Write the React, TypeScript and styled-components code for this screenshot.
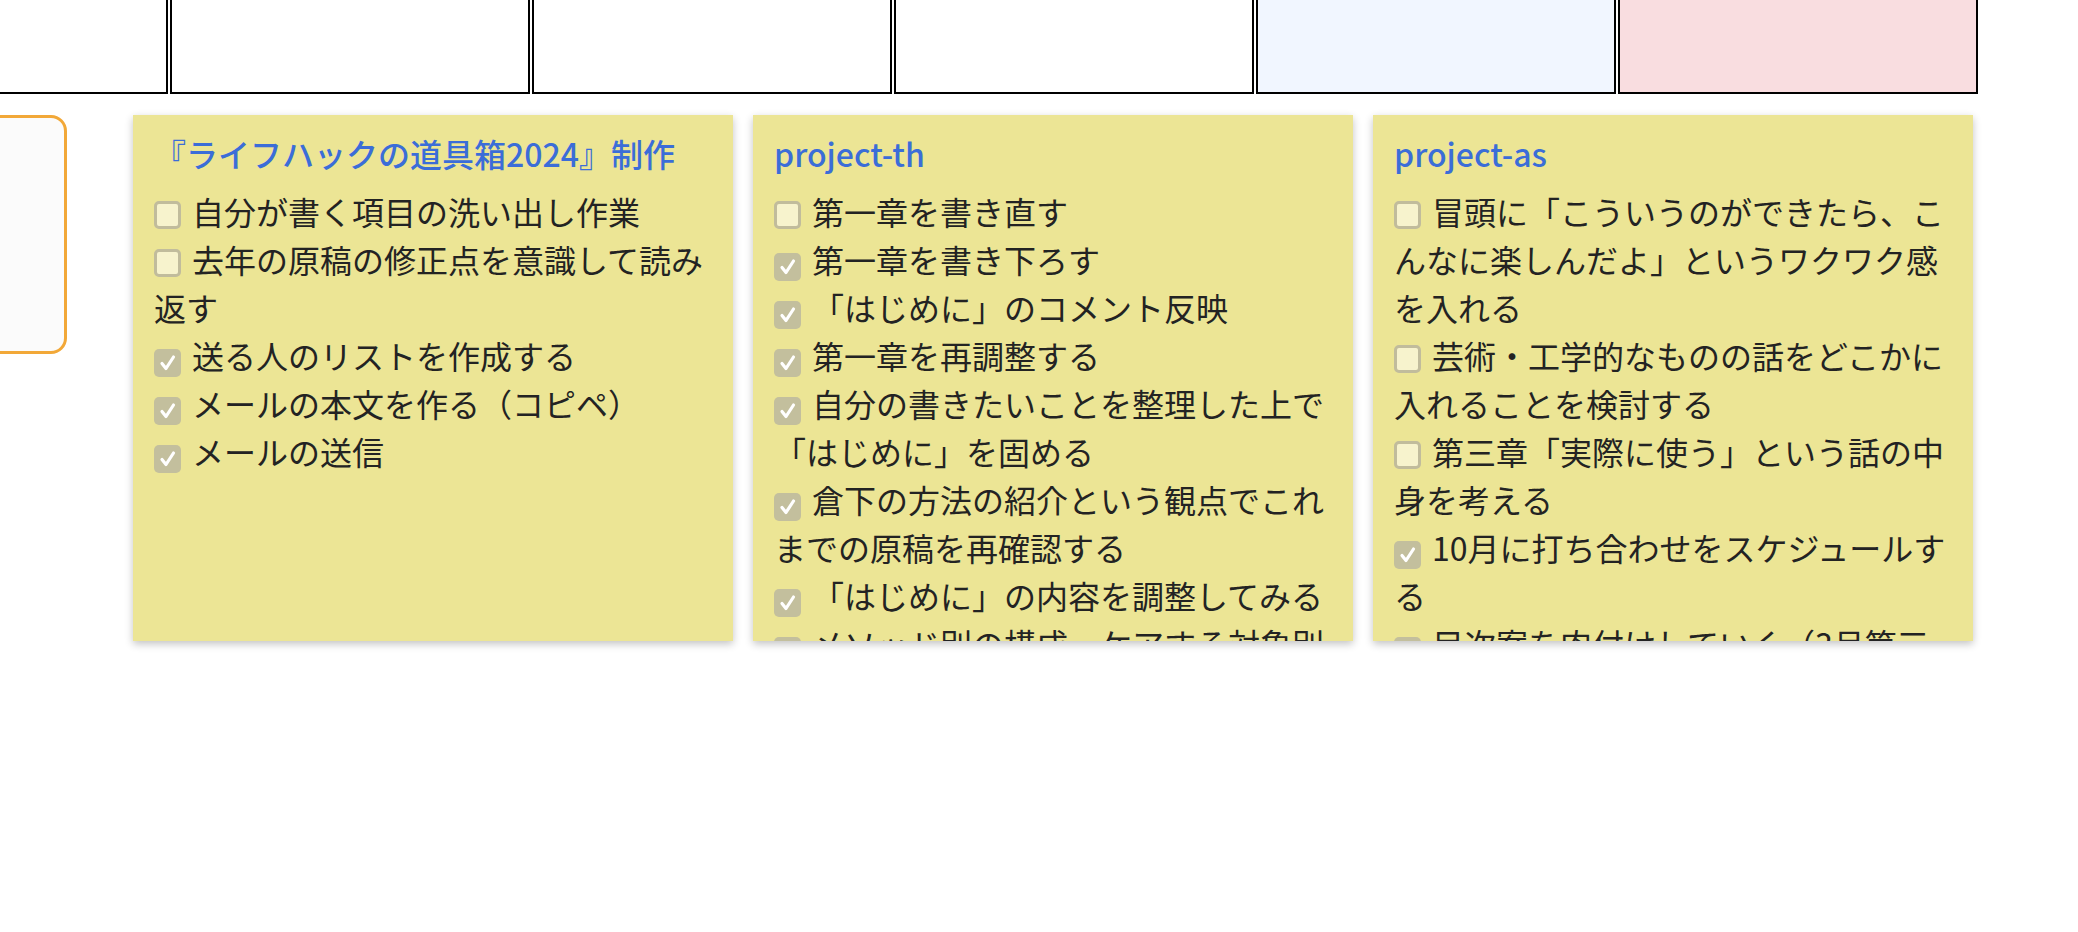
import React from "react";
import styled, { createGlobalStyle } from "styled-components";

const GlobalStyle = createGlobalStyle`
  html, body {
    margin: 0;
    padding: 0;
    background: #ffffff;
  }
  body {
    font-family: "Noto Sans CJK JP", "Noto Sans", sans-serif;
    color: #222;
  }
`;

const Page = styled.div`
  width: 2078px;
  height: 932px;
  overflow: hidden;
`;

const CalendarRow = styled.div`
  display: flex;
  gap: 2px;
  margin-left: -192px;
  height: 94px;
`;

const DayCell = styled.div<{ $tone?: "plain" | "blue" | "pink" }>`
  flex: 0 0 360px;
  height: 94px;
  box-sizing: border-box;
  border: 2px solid #000;
  border-top: none;
  background: ${(p) =>
    p.$tone === "blue" ? "#f1f6ff" : p.$tone === "pink" ? "#f9dde0" : "#ffffff"};
`;

const Board = styled.div`
  display: flex;
  align-items: flex-start;
  gap: 66px;
  margin-top: 21px;
`;

const SideBox = styled.div`
  flex: 0 0 200px;
  margin-left: -133px;
  height: 239px;
  box-sizing: border-box;
  border: 3.5px solid #f2a838;
  border-radius: 16px;
  background: #fbfbfb;
`;

const Cards = styled.div`
  display: flex;
  gap: 20px;
`;

const Card = styled.section`
  width: 600px;
  height: 526px;
  box-sizing: border-box;
  padding: 14px 20px 0 21px;
  background: #ece595;
  box-shadow: 0 3px 8px rgba(0, 0, 0, 0.24);
  overflow: hidden;
`;

const Title = styled.h2`
  margin: 0 0 10px 0;
  font-size: 32px;
  line-height: 48px;
  font-weight: 500;
  color: #3b6dd8;
`;

const List = styled.ul`
  list-style: none;
  margin: 0;
  padding: 0;
`;

const Item = styled.li`
  font-size: 32px;
  line-height: 48px;
  color: #232323;
`;

const Box = styled.span<{ $checked: boolean }>`
  display: inline-flex;
  align-items: center;
  justify-content: center;
  width: 27px;
  height: 28px;
  box-sizing: border-box;
  margin-right: 11px;
  vertical-align: -4px;
  border-radius: 5px;
  border: ${(p) => (p.$checked ? "none" : "3px solid #c1bc9c")};
  background: ${(p) => (p.$checked ? "#c3bf9d" : "#f7f3cd")};
`;

const Check = () => (
  <svg width="20" height="20" viewBox="0 0 20 20">
    <polyline
      points="4,10.5 8,15.5 15.5,4"
      fill="none"
      stroke="#ffffff"
      strokeWidth="3.2"
      strokeLinecap="round"
      strokeLinejoin="round"
    />
  </svg>
);

type Task = { text: string; done: boolean };

const projects: { title: string; tasks: Task[] }[] = [
  {
    title: "『ライフハックの道具箱2024』制作",
    tasks: [
      { text: "自分が書く項目の洗い出し作業", done: false },
      { text: "去年の原稿の修正点を意識して読み返す", done: false },
      { text: "送る人のリストを作成する", done: true },
      { text: "メールの本文を作る（コピペ）", done: true },
      { text: "メールの送信", done: true },
    ],
  },
  {
    title: "project-th",
    tasks: [
      { text: "第一章を書き直す", done: false },
      { text: "第一章を書き下ろす", done: true },
      { text: "「はじめに」のコメント反映", done: true },
      { text: "第一章を再調整する", done: true },
      { text: "自分の書きたいことを整理した上で「はじめに」を固める", done: true },
      { text: "倉下の方法の紹介という観点でこれまでの原稿を再確認する", done: true },
      { text: "「はじめに」の内容を調整してみる", done: true },
      { text: "メソッド別の構成、ケアする対象別の構成を検討する", done: true },
    ],
  },
  {
    title: "project-as",
    tasks: [
      {
        text: "冒頭に「こういうのができたら、こんなに楽しんだよ」というワクワク感を入れる",
        done: false,
      },
      { text: "芸術・工学的なものの話をどこかに入れることを検討する", done: false },
      { text: "第三章「実際に使う」という話の中身を考える", done: false },
      { text: "10月に打ち合わせをスケジュールする", done: true },
      { text: "目次案を肉付けしていく（3月第三週）", done: true },
    ],
  },
];

const tones: ("plain" | "blue" | "pink")[] = ["plain", "plain", "plain", "plain", "blue", "pink"];

export default function App() {
  return (
    <Page>
      <GlobalStyle />
      <CalendarRow>
        {tones.map((t, i) => (
          <DayCell key={i} $tone={t} />
        ))}
      </CalendarRow>
      <Board>
        <SideBox />
        <Cards>
          {projects.map((p) => (
            <Card key={p.title}>
              <Title>{p.title}</Title>
              <List>
                {p.tasks.map((t) => (
                  <Item key={t.text}>
                    <Box $checked={t.done}>{t.done && <Check />}</Box>
                    {t.text}
                  </Item>
                ))}
              </List>
            </Card>
          ))}
        </Cards>
      </Board>
    </Page>
  );
}
